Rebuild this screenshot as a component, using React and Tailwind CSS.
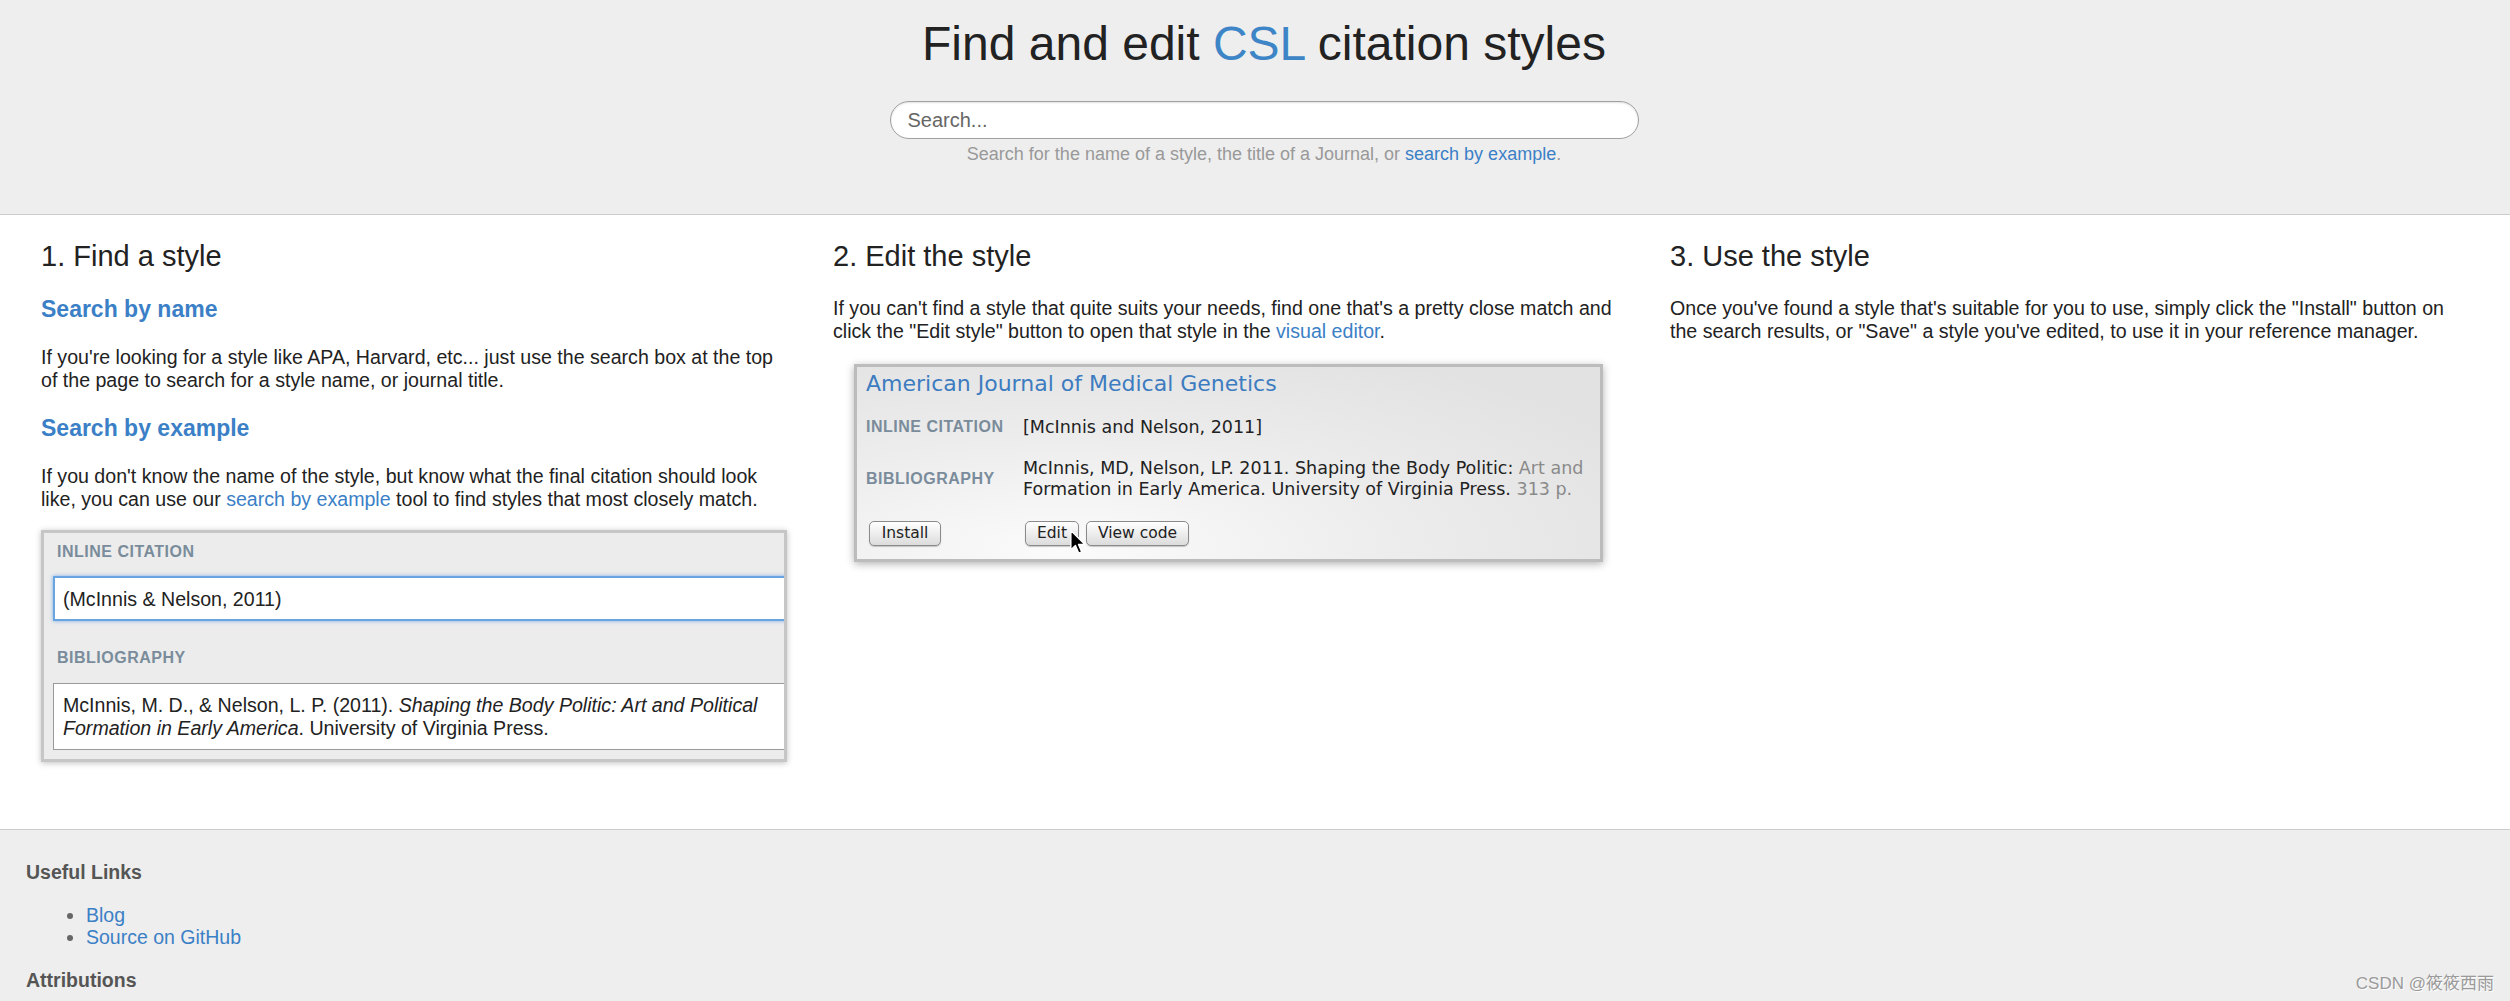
import React from "react";

const sans = "[font-family:'Liberation_Sans',Arial,sans-serif]";
const lucida = "[font-family:'DejaVu_Sans',Verdana,sans-serif]";

const Cursor = () => (
  <svg width="19" height="26" viewBox="0 0 12 17" className="absolute left-[44px] top-[8px]">
    <path
      d="M1 1 L1 13.5 L4 10.8 L6.2 15.8 L8.1 15 L6 10.1 L10.2 10.1 Z"
      fill="#000"
      stroke="#fff"
      strokeWidth="0.9"
      strokeLinejoin="round"
    />
  </svg>
);

const FindCard = () => (
  <div className="w-[746px] h-[232px] border-[3px] border-[#c6c6c6] bg-[#ececec] overflow-hidden shadow-[0_1px_6px_rgba(0,0,0,0.25)] pt-[10px] pl-[9px]">
    <div className="ml-[4px] text-[16px] leading-[18px] font-bold tracking-[0.5px] text-[#7a8c9b]">
      INLINE CITATION
    </div>
    <div className="mt-[15px] h-[45px] w-[760px] border-2 border-[#6aa4e0] bg-white shadow-[0_0_4px_rgba(80,150,230,0.7)] pl-[8px] text-[19.6px] text-[#222] flex items-center">
      (McInnis &amp; Nelson, 2011)
    </div>
    <div className="mt-[28px] ml-[4px] text-[16px] leading-[18px] font-bold tracking-[0.5px] text-[#7a8c9b]">
      BIBLIOGRAPHY
    </div>
    <div className="mt-[16px] w-[760px] border border-[#9a9a9a] bg-white pt-[10px] pb-[9px] pl-[9px] text-[19.6px] leading-[22.6px] text-[#222]">
      McInnis, M. D., &amp; Nelson, L. P. (2011). <i>Shaping the Body Politic: Art and Political</i>
      <br />
      <i>Formation in Early America</i>. University of Virginia Press.
    </div>
  </div>
);

const EditCard = () => (
  <div
    className={`ml-[21px] mt-[22px] w-[749px] h-[198px] border-[3px] border-[#bcbcbc] bg-[radial-gradient(ellipse_at_28%_95%,#fbfbfb_0%,#ececec_45%,#e2e2e2_85%)] shadow-[0_2px_8px_rgba(0,0,0,0.3)] overflow-hidden pt-[4px] pl-[9px] ${lucida}`}
  >
    <div className="text-[22px] leading-[26px] text-[#3d7cc0] whitespace-nowrap">
      American Journal of Medical Genetics
    </div>
    <div className="mt-[19px] grid grid-cols-[157px_1fr] items-center">
      <div className={`${sans} text-[16px] leading-[22px] font-bold tracking-[0.5px] text-[#7a8c9b]`}>
        INLINE CITATION
      </div>
      <div className="text-[17.5px] leading-[22px] text-[#222] whitespace-nowrap">
        [McInnis and Nelson, 2011]
      </div>
    </div>
    <div className="mt-[20px] grid grid-cols-[157px_1fr] items-center">
      <div className={`${sans} text-[16px] leading-[22px] font-bold tracking-[0.5px] text-[#7a8c9b]`}>
        BIBLIOGRAPHY
      </div>
      <div className="text-[17.5px] leading-[20.5px] text-[#222] whitespace-nowrap">
        <div>
          McInnis, MD, Nelson, LP. 2011. Shaping the Body Politic:{" "}
          <span className="text-[#8a8a8a]">Art and</span>
        </div>
        <div>
          Formation in Early America. University of Virginia Press.{" "}
          <span className="text-[#8a8a8a]">313 p.</span>
        </div>
      </div>
    </div>
    <div className="mt-[22px] flex text-[15.5px] text-[#222]">
      <button className="ml-[3px] w-[72px] h-[25px] rounded-[5px] border border-[#8a8a8a] bg-[linear-gradient(#ffffff,#dcdcdc)] shadow-[0_1px_1px_rgba(0,0,0,0.2)]">
        Install
      </button>
      <div className="relative ml-[84px]">
        <button className="w-[54px] h-[25px] rounded-[5px] border border-[#8a8a8a] bg-[linear-gradient(#ffffff,#dcdcdc)] shadow-[0_1px_1px_rgba(0,0,0,0.2)]">
          Edit
        </button>
        <Cursor />
      </div>
      <button className="ml-[7px] w-[103px] h-[25px] rounded-[5px] border border-[#8a8a8a] bg-[linear-gradient(#ffffff,#dcdcdc)] shadow-[0_1px_1px_rgba(0,0,0,0.2)]">
        View code
      </button>
    </div>
  </div>
);

export default function App() {
  const link = "text-[#3b80c6]";
  return (
    <div className={`relative w-full h-[1001px] overflow-hidden bg-white text-[#222] ${sans}`}>
      <header className="h-[215px] bg-[#eeeeee] border-b border-[#cccccc] flex flex-col items-center pl-[18px] pt-[20px]">
        <h1 className="text-[48px] leading-[48px] text-[#222]">
          Find and edit <span className="text-[#3d85c6]">CSL</span> citation styles
        </h1>
        <input
          placeholder="Search..."
          className="mt-[33px] w-[749px] h-[38px] rounded-full border border-[#a0a0a0] bg-white pl-[17px] text-[20px] text-[#333] placeholder:text-[#666] shadow-[inset_0_1px_2px_rgba(0,0,0,0.12)] outline-none"
        />
        <p className="mt-[3px] text-[18px] leading-[24px] text-[#999]">
          Search for the name of a style, the title of a Journal, or{" "}
          <a className={link}>search by example</a>.
        </p>
      </header>

      <main className="h-[614px] pt-[25px] pl-[41px] grid grid-cols-[792px_837px_790px] text-[19.6px] leading-[22.6px]">
        <section className="w-[746px]">
          <h3 className="text-[29px] leading-[33px] mb-[23px]">1. Find a style</h3>
          <h4 className={`text-[23px] leading-[26px] font-bold mb-[24px] ${link}`}>Search by name</h4>
          <p className="mb-[24px]">
            If you're looking for a style like APA, Harvard, etc... just use the search box at the top
            of the page to search for a style name, or journal title.
          </p>
          <h4 className={`text-[23px] leading-[26px] font-bold mb-[24px] ${link}`}>Search by example</h4>
          <p className="mb-[20px]">
            If you don't know the name of the style, but know what the final citation should look
            like, you can use our <a className={link}>search by example</a> tool to find styles that
            most closely match.
          </p>
          <FindCard />
        </section>

        <section className="w-[800px]">
          <h3 className="text-[29px] leading-[33px] mb-[24px]">2. Edit the style</h3>
          <p>
            If you can't find a style that quite suits your needs, find one that's a pretty close match
            and click the "Edit style" button to open that style in the{" "}
            <a className={link}>visual editor</a>.
          </p>
          <EditCard />
        </section>

        <section className="w-[790px]">
          <h3 className="text-[29px] leading-[33px] mb-[24px]">3. Use the style</h3>
          <p>
            Once you've found a style that's suitable for you to use, simply click the "Install" button
            on the search results, or "Save" a style you've edited, to use it in your reference manager.
          </p>
        </section>
      </main>

      <footer className="border-t border-[#cccccc] bg-[#eeeeee] pl-[26px] pt-[31px] pb-[10px] text-[19.5px] leading-[22px] text-[#555]">
        <h5 className="font-bold">Useful Links</h5>
        <ul className="mt-[21px] list-disc pl-[60px] marker:text-[#666]">
          <li>
            <a className={link}>Blog</a>
          </li>
          <li>
            <a className={link}>Source on GitHub</a>
          </li>
        </ul>
        <h5 className="mt-[21px] font-bold">Attributions</h5>
      </footer>

      <div className="absolute right-[16px] bottom-[7px] text-[17px] leading-[20px] text-[#9a9a9a] [text-shadow:1px_1px_0_rgba(255,255,255,0.9)] [font-family:'Liberation_Sans','Noto_Sans_CJK_SC',sans-serif]">
        CSDN @筱筱西雨
      </div>
    </div>
  );
}
